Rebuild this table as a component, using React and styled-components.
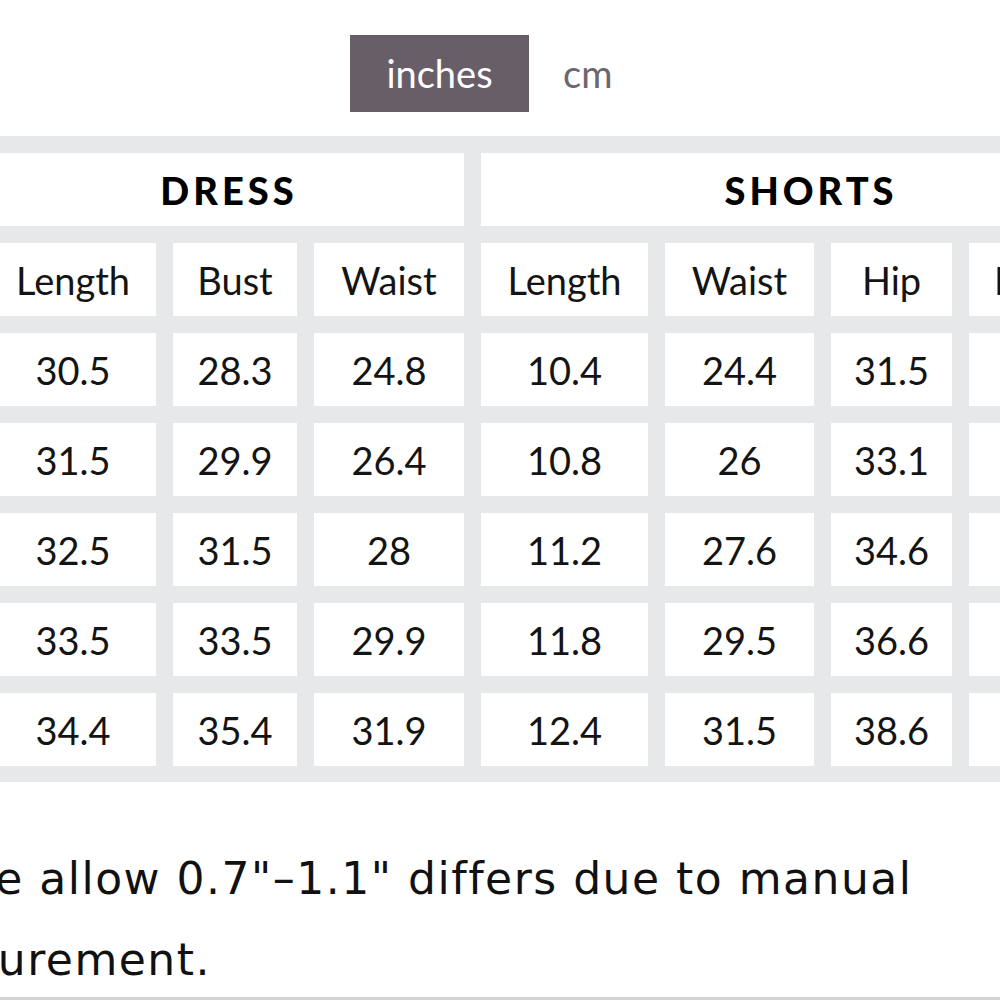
import React, { useState } from 'react'
import styled, { createGlobalStyle } from 'styled-components'

const GlobalStyle = createGlobalStyle`
    html, body {
        margin: 0;
        padding: 0;
        background: #ffffff;
    }
`

const Page = styled.div`
    width: 1000px;
    height: 1000px;
    box-sizing: border-box;
    overflow: hidden;
    border-bottom: 3px solid #d3d3d6;
    background: #fff;
`

const Sheet = styled.div`
    margin-left: -164px;
    width: 1320px;
`

const ToggleRow = styled.div`
    display: flex;
    align-items: center;
    padding: 35px 0 24px 514px;
`

const UnitButton = styled.button`
    border: none;
    margin: 0;
    height: 77px;
    padding: 0 34px;
    min-width: ${p => (p.active ? '179px' : '0')};
    background: ${p => (p.active ? '#675e68' : 'transparent')};
    color: ${p => (p.active ? '#ffffff' : '#6c6670')};
    font-family: Lato, "Open Sans", sans-serif;
    font-size: 38px;
    line-height: 77px;
    cursor: pointer;
`

const Table = styled.div`
    display: inline-grid;
    grid-template-columns: 120px 166px 124px 150px 167px 149px 121px 168px;
    grid-auto-rows: 73px;
    gap: 17px;
    padding: 17px 17px 16px 17px;
    background: #e7e8ea;
`

const Cell = styled.div`
    background: #ffffff;
    display: flex;
    align-items: center;
    justify-content: center;
    font-family: Lato, "Open Sans", sans-serif;
    font-size: 38px;
    color: #141414;
    grid-column: span ${p => p.span || 1};
`

const GroupCell = styled(Cell)`
    font-weight: 900;
    font-size: 38px;
    letter-spacing: 4px;
    text-indent: 4px;
    color: #000;
`

const Note = styled.p`
    margin: 56px 0 0 36px;
    width: 1100px;
    font-family: "DejaVu Sans", Inter, sans-serif;
    font-size: 44px;
    letter-spacing: 1.5px;
    line-height: 81px;
    color: #111;
`

const dress = ['Length', 'Bust', 'Waist']
const shorts = ['Length', 'Waist', 'Hip', 'Inseam']

const rows = {
    inches: [
        ['S', '30.5', '28.3', '24.8', '10.4', '24.4', '31.5', '2.4'],
        ['M', '31.5', '29.9', '26.4', '10.8', '26', '33.1', '2.4'],
        ['L', '32.5', '31.5', '28', '11.2', '27.6', '34.6', '2.8'],
        ['XL', '33.5', '33.5', '29.9', '11.8', '29.5', '36.6', '2.8'],
        ['2XL', '34.4', '35.4', '31.9', '12.4', '31.5', '38.6', '3.1'],
    ],
    cm: [
        ['S', '77.5', '72', '63', '26.5', '62', '80', '6'],
        ['M', '80', '76', '67', '27.5', '66', '84', '6'],
        ['L', '82.5', '80', '71', '28.5', '70', '88', '7'],
        ['XL', '85', '85', '76', '30', '75', '93', '7'],
        ['2XL', '87.5', '90', '81', '31.5', '80', '98', '8'],
    ],
}

const App = () => {
    const [unit, setUnit] = useState('inches')

    return (
        <>
            <GlobalStyle />
            <Page>
                <Sheet>
                    <ToggleRow>
                        <UnitButton active={unit === 'inches'} onClick={() => setUnit('inches')}>inches</UnitButton>
                        <UnitButton active={unit === 'cm'} onClick={() => setUnit('cm')}>cm</UnitButton>
                    </ToggleRow>

                    <Table>
                        <Cell>Size</Cell>
                        <GroupCell span={3}>DRESS</GroupCell>
                        <GroupCell span={4}>SHORTS</GroupCell>

                        <Cell />
                        {dress.map((d, i) => <Cell key={'d' + i}>{d}</Cell>)}
                        {shorts.map((s, i) => <Cell key={'s' + i}>{s}</Cell>)}

                        {rows[unit].map((row, r) =>
                            row.map((v, c) => <Cell key={r + '-' + c}>{v}</Cell>)
                        )}
                    </Table>

                    <Note>Please allow 0.7"–1.1" differs due to manual measurement.</Note>
                </Sheet>
            </Page>
        </>
    )
}

export default App
